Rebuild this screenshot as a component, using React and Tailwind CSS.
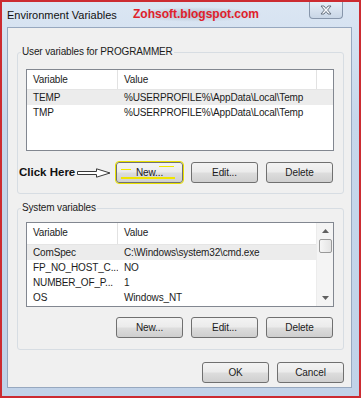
import React from "react";

const Btn = ({ children, className = "" }) => (
  <button
    className={`relative h-[21px] w-[67px] rounded-[3px] border border-[#707070] bg-[linear-gradient(#f3f3f3_0%,#ebebeb_48%,#dddddd_52%,#cfcfcf_100%)] text-[10px] leading-[19px] tracking-[-0.1px] text-[#1b1b1b] ${className}`}
  >
    {children}
  </button>
);

const Header = ({ scroll }) => (
  <div className={`flex border-b border-[#e5e5e5] bg-white leading-[19px] ${scroll ? "h-[22px]" : "h-[20px]"}`}>
    <div className="w-[91px] border-r border-[#e2e2e2] pl-[6px]">Variable</div>
    <div className={`${scroll ? "flex-1" : "w-[199px] border-r border-[#e2e2e2]"} pl-[6px]`}>Value</div>
  </div>
);

const Row = ({ name, value, selected }) => (
  <div className={`flex h-[15px] leading-[15px] ${selected ? "bg-[#ececec]" : ""}`}>
    <div className="w-[91px] shrink-0 overflow-hidden whitespace-nowrap pl-[6px]">{name}</div>
    <div className="whitespace-nowrap pl-[6px]">{value}</div>
  </div>
);

const Arrow = () => (
  <svg width="34" height="10" viewBox="0 0 34 10">
    <path d="M0.5 3.5 H19.5 V0.8 L33 5 L19.5 9.2 V6.5 H0.5 Z" fill="#fff" stroke="#3a3a3a" strokeWidth="1" />
  </svg>
);

const CloseX = () => (
  <svg width="12" height="10" viewBox="0 0 12 10">
    <path
      d="M1 1 H4 L6 3.5 L8 1 H11 L7.6 5 L11 9 H8 L6 6.5 L4 9 H1 L4.4 5 Z"
      fill="#f7f9fc"
      stroke="#5b6675"
      strokeWidth="0.9"
      strokeLinejoin="round"
    />
  </svg>
);

export default function App() {
  return (
    <div className="h-[400px] w-[361px] bg-white font-['Liberation_Sans',Arial,sans-serif] text-[10px] tracking-[-0.15px] text-[#1b1b1b]">
      <div className="flex h-[398px] flex-col border-2 border-[#cc2b31] bg-[linear-gradient(180deg,#dbe6f3_0%,#c7d7eb_30%,#c1d2e8_100%)]">
        {/* title bar */}
        <div className="flex h-[25px] items-start">
          <div className="w-[127px] whitespace-nowrap pl-[5px] pt-[7px] text-[11px] leading-[13px] tracking-normal text-[#111]">
            Environment Variables
          </div>
          <div className="mt-[5px] rounded-full bg-[radial-gradient(ellipse_at_center,#aebbcb_0%,rgba(190,205,225,0)_70%)] px-[4px] text-[12px] font-bold leading-[15px] tracking-normal text-[#e0202a]">
            Zohsoft.blogspot.com
          </div>
          <div className="ml-auto mr-[16px] flex h-[17px] w-[34px] items-center justify-center rounded-b-[4px] border border-t-0 border-[#8796ab] bg-[linear-gradient(#e6eef8,#c9d6e6)]">
            <CloseX />
          </div>
        </div>

        {/* client area */}
        <div className="ml-[5px] flex h-[361px] w-[345px] flex-col border border-[#97a8bf] bg-[#f0f0f0]">
          <fieldset className="ml-[9px] mt-[17px] w-[327px] rounded-[3px] border border-[#d7dde3] pb-[10px]">
            <legend className="ml-[3px] px-[1px] leading-[14px]">User variables for PROGRAMMER</legend>
            <div className="ml-[8px] mt-[10px] h-[82px] w-[308px] border border-[#828790] bg-white">
              <Header />
              <Row name="TEMP" value="%USERPROFILE%\AppData\Local\Temp" selected />
              <Row name="TMP" value="%USERPROFILE%\AppData\Local\Temp" />
            </div>
            <div className="mt-[11px] flex h-[21px] items-center">
              <span className="ml-[1px] whitespace-nowrap text-[11.5px] font-bold tracking-normal text-[#111]">Click Here</span>
              <span className="ml-[2px] flex"><Arrow /></span>
              <div className="ml-auto mr-[10px] flex gap-[8px]">
                <Btn className="outline outline-1 outline-[#e8e000]">
                  New...
                  <span className="absolute left-[4px] top-[6px] h-[1px] w-[10px] bg-[#f0e800]" />
                  <span className="absolute right-[8px] top-[3px] h-[1px] w-[15px] bg-[#f0e800]" />
                  <span className="absolute bottom-[3px] left-[4px] h-[2px] w-[54px] bg-[#eee400]" />
                </Btn>
                <Btn>Edit...</Btn>
                <Btn>Delete</Btn>
              </div>
            </div>
          </fieldset>

          <fieldset className="ml-[9px] mt-[7px] w-[327px] rounded-[3px] border border-[#d7dde3] pb-[11px]">
            <legend className="ml-[3px] px-[1px] leading-[14px]">System variables</legend>
            <div className="ml-[8px] mt-[7px] flex h-[85px] w-[308px] border border-[#828790] bg-white">
              <div className="flex-1">
                <Header scroll />
                <Row name="ComSpec" value="C:\Windows\system32\cmd.exe" selected />
                <Row name="FP_NO_HOST_C..." value="NO" />
                <Row name="NUMBER_OF_P..." value="1" />
                <Row name="OS" value="Windows_NT" />
              </div>
              <div className="flex w-[17px] flex-col items-center border-l border-[#ececec] bg-[#f4f4f4]">
                <div className="flex h-[16px] items-center justify-center">
                  <svg width="7" height="4" viewBox="0 0 7 4"><path d="M0 4 L3.5 0 L7 4 Z" fill="#606060" /></svg>
                </div>
                <div className="h-[14px] w-[13px] rounded-[2px] border border-[#9a9a9a] bg-[linear-gradient(90deg,#f6f6f6,#e4e4e4)]" />
                <div className="flex-1" />
                <div className="flex h-[16px] items-center justify-center">
                  <svg width="7" height="4" viewBox="0 0 7 4"><path d="M0 0 L3.5 4 L7 0 Z" fill="#606060" /></svg>
                </div>
              </div>
            </div>
            <div className="mr-[10px] mt-[10px] flex justify-end gap-[8px]">
              <Btn>New...</Btn>
              <Btn>Edit...</Btn>
              <Btn>Delete</Btn>
            </div>
          </fieldset>

          <div className="mr-[7px] mt-[12px] flex justify-end gap-[8px]">
            <Btn>OK</Btn>
            <Btn>Cancel</Btn>
          </div>
        </div>
      </div>
    </div>
  );
}
